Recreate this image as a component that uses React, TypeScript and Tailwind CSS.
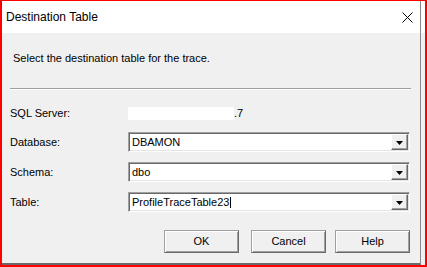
import React from "react";

const font = { fontFamily: '"Liberation Sans", Arial, sans-serif' };

function Combo({ value, caret }: { value: string; caret?: boolean }) {
  return (
    <div className="flex h-[20px] w-[282px] border-t border-l border-[#a0a0a0] border-b-white border-r-white border-b border-r bg-white shadow-[inset_1px_1px_0_#696969,inset_-1px_-1px_0_#e3e3e3] p-[1px]">
      <div className="flex flex-1 items-center pl-[2px] text-[11px] leading-[13px] text-black">
        <span>{value}</span>
        {caret && <span className="ml-[1px] inline-block h-[11px] w-[1px] bg-black" />}
      </div>
      <div className="flex h-full w-[17px] items-center justify-center border-t border-l border-white border-b border-r border-b-[#696969] border-r-[#696969] bg-[#f0f0f0] shadow-[inset_-1px_-1px_0_#a0a0a0]">
        <svg width="7" height="4" viewBox="0 0 7 4" className="mt-[1px]">
          <polygon points="0,0 7,0 3.5,4" fill="#000" />
        </svg>
      </div>
    </div>
  );
}

function Btn({ label, className = "" }: { label: string; className?: string }) {
  return (
    <div
      className={`flex h-[23px] w-[75px] items-center justify-center border-t border-l border-[#a0a0a0] border-b border-r border-b-[#696969] border-r-[#696969] bg-[#f0f0f0] shadow-[inset_1px_1px_0_#ffffff,inset_-1px_-1px_0_#a0a0a0] text-[11px] leading-[13px] text-black ${className}`}
    >
      {label}
    </div>
  );
}

export default function App() {
  return (
    <div
      className="flex h-[267px] w-[427px] border-t border-l-2 border-r-2 border-b-2 border-[#ff0000] bg-[#f0f0f0]"
      style={font}
    >
      <div className="flex w-[419px] flex-col border-r border-r-[#8a8a8a] border-b-2 border-b-[#6a6a6a]">
        <div className="flex h-[32px] items-center justify-between bg-white pl-[4px] pr-[7px]">
          <span className="text-[12px] leading-[14px] text-black">Destination Table</span>
          <svg width="11" height="11" viewBox="0 0 11 11">
            <path d="M0.5 0.5 L10.5 10.5 M10.5 0.5 L0.5 10.5" stroke="#000" strokeWidth="1" />
          </svg>
        </div>
        <div className="flex flex-1 flex-col bg-[#f0f0f0] text-[11px] leading-[13px] text-black">
          <div className="ml-[11px] mt-[19px] h-[13px]">Select the destination table for the trace.</div>
          <div className="ml-[8px] mr-[9px] mt-[23px] h-[2px] border-t border-t-[#a0a0a0] border-b border-b-white" />
          <div className="ml-[8px] mt-[17px] flex h-[13px] items-center">
            <span className="w-[118px]">SQL Server:</span>
            <span className="h-[13px] w-[106px] bg-white" />
            <span>.7</span>
          </div>
          <div className="ml-[8px] mt-[12px] flex items-center">
            <span className="w-[118px]">Database:</span>
            <Combo value="DBAMON" />
          </div>
          <div className="ml-[8px] mt-[10px] flex items-center">
            <span className="w-[118px]">Schema:</span>
            <Combo value="dbo" />
          </div>
          <div className="ml-[8px] mt-[10px] flex items-center">
            <span className="w-[118px]">Table:</span>
            <Combo value="ProfileTraceTable23" caret />
          </div>
          <div className="mr-[10px] mt-[18px] flex justify-end">
            <Btn label="OK" />
            <Btn label="Cancel" className="ml-[12px]" />
            <Btn label="Help" className="ml-[9px]" />
          </div>
        </div>
      </div>
      <div className="flex flex-1 flex-col">
        <div className="h-[32px] bg-white" />
        <div className="flex-1 bg-[#f0f0f0]" />
      </div>
    </div>
  );
}
